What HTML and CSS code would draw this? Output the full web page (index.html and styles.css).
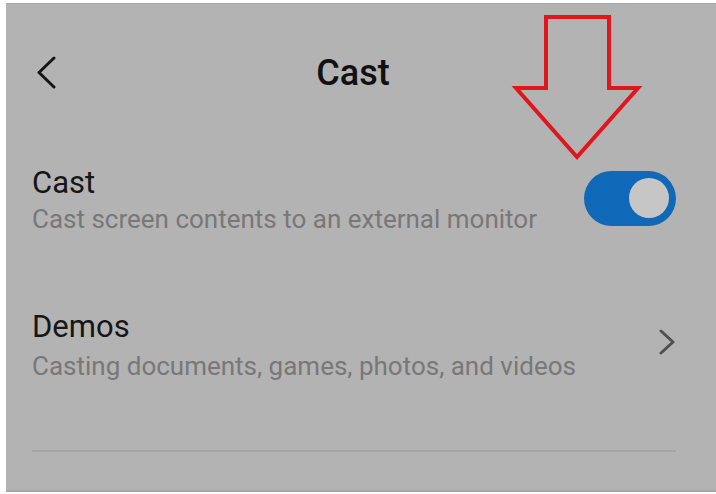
FILE: index.html
```html
<!DOCTYPE html>
<html lang="en">

<head>
    <meta charset="UTF-8">
    <meta name="viewport" content="width=device-width, initial-scale=1.0">
    <title>Cast</title>
    <link rel="stylesheet" href="styles.css">
</head>

<body>
    <div class="screen">
        <!-- Header -->
        <div class="header">
            <svg class="back" width="24" height="36" viewBox="0 0 24 36">
                <polyline points="19,2 4,16.5 19,31" fill="none" stroke="#151515" stroke-width="3" stroke-linecap="round" stroke-linejoin="round"/>
            </svg>
            <h1 class="title">Cast</h1>
            <span></span>
        </div>

        <!-- Settings -->
        <div class="row row-cast">
            <div class="row-text">
                <div class="label">Cast</div>
                <div class="desc">Cast screen contents to an external monitor</div>
            </div>
            <div class="toggle"><span class="knob"></span></div>
        </div>

        <div class="row row-demos">
            <div class="row-text">
                <div class="label">Demos</div>
                <div class="desc">Casting documents, games, photos, and videos</div>
            </div>
            <svg class="more" width="18" height="28" viewBox="0 0 18 28">
                <polyline points="3,2 15,13 3,24" fill="none" stroke="#505050" stroke-width="3" stroke-linecap="round" stroke-linejoin="round"/>
            </svg>
        </div>

        <div class="divider"></div>

        <!-- red annotation arrow -->
        <svg class="arrow" width="140" height="155" viewBox="0 0 140 155">
            <polygon points="36,6 99,6 99,77 128,77 67,146 6,77 36,77" fill="none" stroke="#e0161c" stroke-width="4" stroke-linejoin="miter"/>
        </svg>
    </div>
</body>

</html>
```

FILE: styles.css
```css
body {
    margin: 0;
    background-color: #ffffff;
    font-family: Roboto, "Liberation Sans", sans-serif;
}

.screen {
    position: relative;
    margin: 3px 0 0 6px;
    height: 486px;
    background-color: #b3b3b3;
    border-top: 1px solid #a9a9a9;
    border-bottom: 2px solid #a6a6a6;
    padding: 0 40px 0 26px;
}

.header {
    display: grid;
    grid-template-columns: 1fr auto 1fr;
    align-items: center;
    height: 120px;
    box-sizing: border-box;
    padding-top: 18px;
    padding-right: 2px;
}

.back {
    margin-left: 3px;
    margin-top: 2px;
}

.title {
    margin: 0;
    font-size: 36px;
    font-weight: 500;
    color: #111111;
}

.row {
    display: flex;
    align-items: center;
    justify-content: space-between;
}

.row-cast {
    margin-top: 41px;
}

.row-demos {
    margin-top: 74px;
}

.label {
    font-size: 31px;
    line-height: 36px;
    color: #161616;
}

.desc {
    margin-top: 2px;
    font-size: 26px;
    line-height: 32px;
    color: #787878;
}

.row-demos .desc {
    margin-top: 5px;
}

.toggle {
    width: 92px;
    height: 55px;
    margin-top: -4px;
    border-radius: 28px;
    background-color: #0f68b8;
    display: flex;
    align-items: center;
    justify-content: flex-end;
    padding-right: 7px;
    box-sizing: border-box;
}

.knob {
    width: 40px;
    height: 40px;
    border-radius: 50%;
    background-color: #c6c6c6;
}

.more {
    margin-top: -6px;
}

.divider {
    height: 2px;
    margin-top: 68px;
    background-color: #a5a5a5;
}

.arrow {
    position: absolute;
    left: 504px;
    top: 7px;
}
```
